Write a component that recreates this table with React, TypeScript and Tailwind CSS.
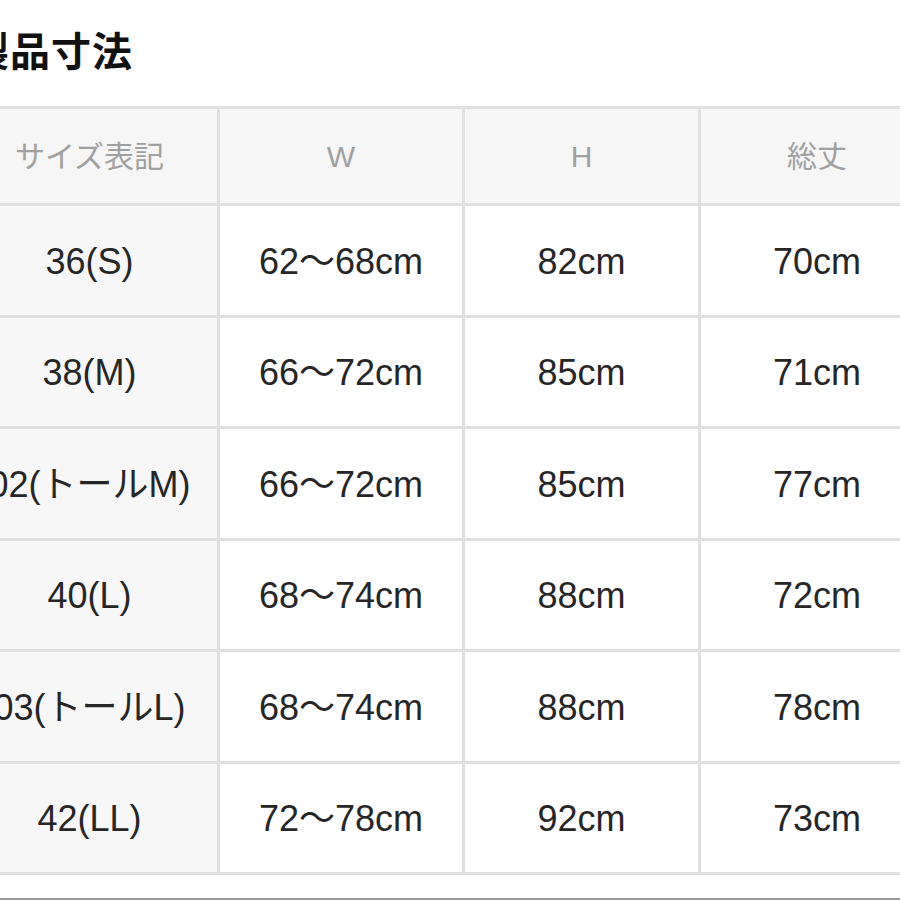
import React from "react";

const rows: [string, string, string, string][] = [
  ["36(S)", "62〜68cm", "82cm", "70cm"],
  ["38(M)", "66〜72cm", "85cm", "71cm"],
  ["02(トールM)", "66〜72cm", "85cm", "77cm"],
  ["40(L)", "68〜74cm", "88cm", "72cm"],
  ["03(トールL)", "68〜74cm", "88cm", "78cm"],
  ["42(LL)", "72〜78cm", "92cm", "73cm"],
];

const head = "bg-[#f6f6f6] flex items-center justify-center text-[30px] text-[#a0a0a0] whitespace-nowrap";
const cell = "flex items-center justify-center pt-[3px] text-[36px] text-[#262626] whitespace-nowrap";

export default function App() {
  return (
    <div
      className="relative w-[900px] h-[900px] overflow-hidden bg-white"
      style={{ fontFamily: '"Liberation Sans", "Noto Sans CJK JP", sans-serif' }}
    >
      <div className="h-[106px] flex items-center pb-[8px]">
        <h1
          className="ml-[-31px] text-[40px] font-bold leading-none text-[#111] tracking-[1px]"
          style={{ fontFamily: '"Noto Sans CJK JP", sans-serif' }}
        >
          製品寸法
        </h1>
      </div>
      <div className="ml-[-38px] w-[974px] bg-[#e0e0e0] grid grid-cols-[255px_242px_233px_232px] auto-rows-[108.5px] gap-[3px] pt-[3px] pb-[3px] [grid-template-rows:94px]">
        <div className={head}>サイズ表記</div>
        <div className={head}>W</div>
        <div className={head}>H</div>
        <div className={head}>総丈</div>
        {rows.map((r, i) => (
          <React.Fragment key={i}>
            <div className={`${cell} bg-[#f7f7f7]`}>{r[0]}</div>
            <div className={`${cell} bg-white`}>{r[1]}</div>
            <div className={`${cell} bg-white`}>{r[2]}</div>
            <div className={`${cell} bg-white`}>{r[3]}</div>
          </React.Fragment>
        ))}
      </div>
      <div className="absolute left-0 right-0 top-[898px] h-[2px] bg-[#9a9a9a]" />
    </div>
  );
}
